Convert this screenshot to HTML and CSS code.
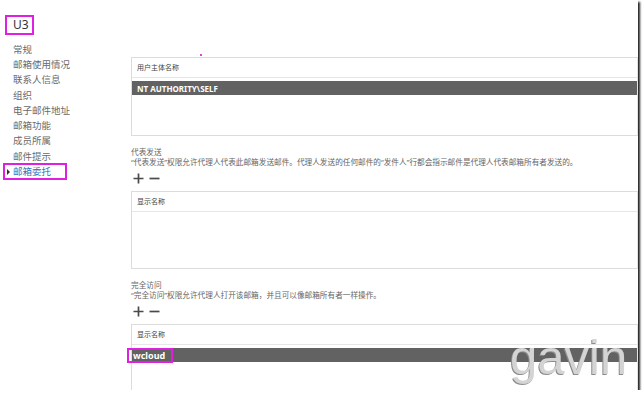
FILE: index.html
```html
<!DOCTYPE html>
<html lang="zh-CN">
<head>
    <meta charset="UTF-8">
    <meta name="viewport" content="width=device-width, initial-scale=1.0">
    <title>U3 - 邮箱委托</title>
    <link rel="stylesheet" href="styles.css">
</head>
<body>
    <div class="frame">
        <aside class="nav">
            <div class="title"><span class="title-mark">U3</span></div>
            <ul class="menu">
                <li>常规</li>
                <li>邮箱使用情况</li>
                <li>联系人信息</li>
                <li>组织</li>
                <li>电子邮件地址</li>
                <li>邮箱功能</li>
                <li>成员所属</li>
                <li>邮件提示</li>
                <li class="active"><span class="active-mark">邮箱委托</span></li>
            </ul>
        </aside>

        <main class="content">
            <span class="dot"></span>

            <div class="grid grid-self">
                <div class="grid-head">用户主体名称</div>
                <div class="grid-row">NT AUTHORITY\SELF</div>
            </div>

            <section class="perm">
                <div class="perm-label">代表发送</div>
                <div class="perm-desc">“代表发送”权限允许代理人代表此邮箱发送邮件。代理人发送的任何邮件的“发件人”行都会指示邮件是代理人代表邮箱所有者发送的。</div>
                <div class="tools">
                    <svg class="tool" width="11" height="11" viewBox="0 0 11 11"><path d="M5.5 0.5v10M0.5 5.5h10" /></svg>
                    <svg class="tool" width="11" height="11" viewBox="0 0 11 11"><path d="M0.5 5.5h10" /></svg>
                </div>
                <div class="grid grid-send">
                    <div class="grid-head">显示名称</div>
                </div>
            </section>

            <section class="perm">
                <div class="perm-label">完全访问</div>
                <div class="perm-desc">“完全访问”权限允许代理人打开该邮箱，并且可以像邮箱所有者一样操作。</div>
                <div class="tools">
                    <svg class="tool" width="11" height="11" viewBox="0 0 11 11"><path d="M5.5 0.5v10M0.5 5.5h10" /></svg>
                    <svg class="tool" width="11" height="11" viewBox="0 0 11 11"><path d="M0.5 5.5h10" /></svg>
                </div>
                <div class="grid grid-full">
                    <div class="grid-head">显示名称</div>
                    <div class="grid-row"><span class="row-mark">wcloud</span></div>
                </div>
            </section>
        </main>

        <div class="watermark">gavin</div>
    </div>
</body>
</html>
```

FILE: styles.css
```css
body {
    margin: 0;
    background-color: #ffffff;
    font-family: "Noto Sans", "Noto Sans CJK SC", sans-serif;
    color: #555;
}
.frame {
    position: relative;
    display: flex;
    width: 638px;
    height: 390px;
    overflow: hidden;
    background-color: #fff;
    box-shadow: 2px 2px 2px #222;
}

/* left navigation */
.nav {
    width: 131px;
    flex-shrink: 0;
    padding-top: 12px;
}
.title-mark {
    display: inline-block;
    margin-left: 5px;
    width: 19px;
    height: 16px;
    padding-left: 6px;
    border: 2px solid #e020e0;
    font-size: 12px;
    line-height: 16px;
    color: #333;
}
.menu {
    list-style: none;
    margin: 0;
    padding: 6px 0 0 13px;
}
.menu li {
    display: flex;
    align-items: center;
    height: 15.3px;
    font-size: 9.5px;
    color: #6a6a6a;
}
.menu li.active {
    color: #2f74c0;
}
.active-mark {
    position: relative;
    display: inline-block;
    margin-left: -10px;
    padding: 0 14px 0 8px;
    line-height: 13px;
    border: 2px solid #e020e0;
}
.active-mark::before {
    content: "";
    position: absolute;
    left: 2px;
    top: 4px;
    border-left: 3px solid #333;
    border-top: 3px solid transparent;
    border-bottom: 3px solid transparent;
}

/* main content */
.content {
    position: relative;
    flex: 1;
    padding-top: 57px;
}
.dot {
    position: absolute;
    left: 69px;
    top: 54px;
    width: 2px;
    height: 2px;
    background-color: #e040e0;
}
.grid {
    border: 1px solid #dcdcdc;
    border-right-color: #e4e4e4;
}
.grid-head {
    height: 19px;
    line-height: 19px;
    padding-left: 5px;
    font-size: 7px;
    color: #444;
    border-bottom: 1px solid #e6e6e6;
}
.grid-row {
    display: flex;
    align-items: center;
    height: 14px;
    margin-top: 3px;
    padding-left: 5px;
    background-color: #626262;
    color: #fff;
    font-size: 8px;
    font-weight: bold;
}
.grid-self {
    height: 77px;
}
.grid-send {
    height: 76px;
}
.grid-full {
    height: 80px;
}
.row-mark {
    margin-left: -10px;
    padding: 0 6px 0 4px;
    line-height: 11px;
    border: 2px solid #e020e0;
    font-size: 9px;
}

.perm {
    margin-top: 11px;
}
.perm-label, .perm-desc {
    height: 10px;
    line-height: 10px;
    font-size: 7.65px;
    color: #666;
    white-space: nowrap;
}
.tools {
    display: flex;
    gap: 5px;
    margin: 5px 0 7px 2px;
    height: 12px;
    align-items: center;
}
.tool path {
    stroke: #4a4a4a;
    stroke-width: 1.7;
    fill: none;
}

.watermark {
    position: absolute;
    left: 510px;
    top: 333px;
    font-family: "Liberation Sans", Arial, sans-serif;
    font-size: 49px;
    line-height: 49px;
    color: #d4d4d4;
    text-shadow: -1px 1px 0 #8c8c8c;
}
```
